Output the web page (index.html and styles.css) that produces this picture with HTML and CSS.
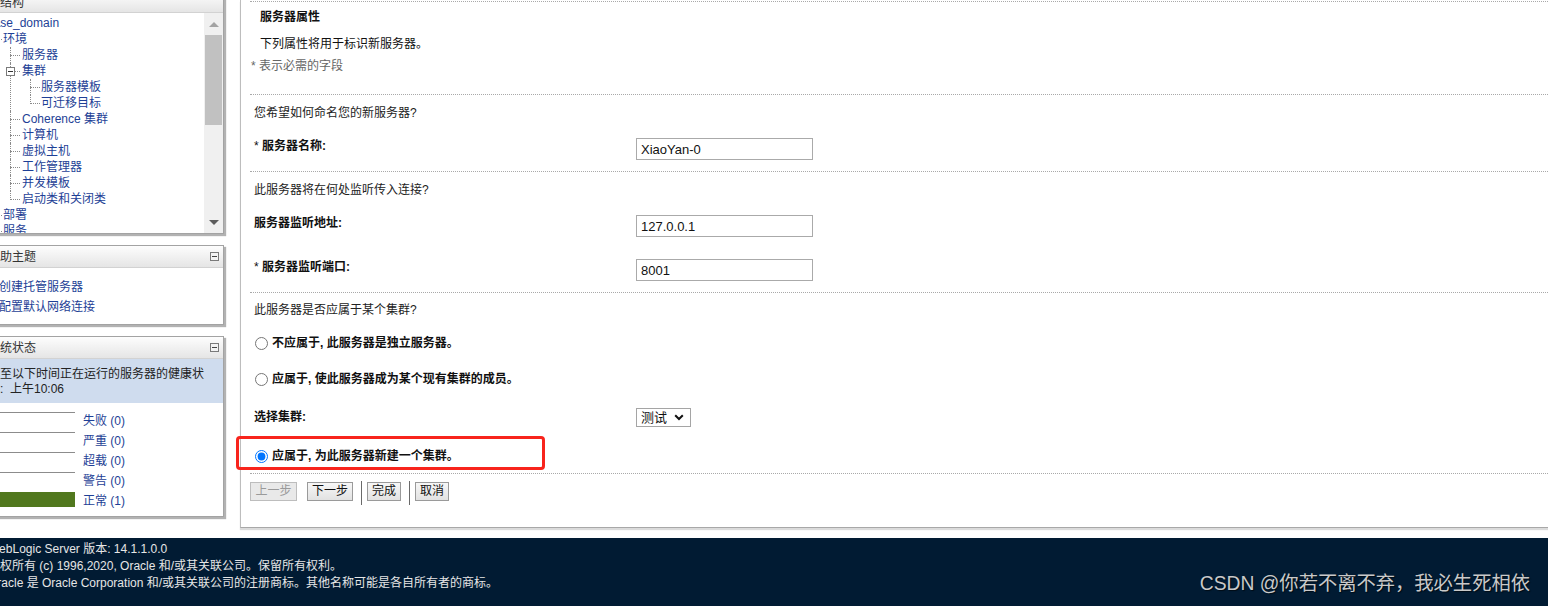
FILE: index.html
```html
<!DOCTYPE html>
<html lang="zh">
<head>
<meta charset="utf-8">
<title>创建新服务器</title>
<link rel="stylesheet" href="styles.css">
</head>
<body>
<div class="page">
  <div class="content">
    <aside class="side">
      <section class="panel panel-tree">
        <div class="panel-head tree-head"><span class="panel-title">域结构</span></div>
        <div class="tree-body">
          <div class="tree">
            <ul class="t0">
              <li><span class="node">base_domain</span>
                <ul class="t1">
                  <li><span class="node">环境</span>
                    <ul class="t2">
                      <li><span class="node">服务器</span></li>
                      <li><span class="toggle"></span><span class="node">集群</span>
                        <ul class="t3">
                          <li><span class="node">服务器模板</span></li>
                          <li class="last"><span class="node">可迁移目标</span></li>
                        </ul>
                      </li>
                      <li><span class="node">Coherence 集群</span></li>
                      <li><span class="node">计算机</span></li>
                      <li><span class="node">虚拟主机</span></li>
                      <li><span class="node">工作管理器</span></li>
                      <li><span class="node">并发模板</span></li>
                      <li class="last"><span class="node">启动类和关闭类</span></li>
                    </ul>
                  </li>
                  <li><span class="node">部署</span></li>
                  <li><span class="node">服务</span></li>
                  <li><span class="node">安全领域</span></li>
                </ul>
              </li>
            </ul>
          </div>
          <div class="vscroll">
            <div class="vs-btn"><span class="arrow-up"></span></div>
            <div class="vs-thumb"></div>
            <div class="vs-space"></div>
            <div class="vs-btn"><span class="arrow-down"></span></div>
          </div>
        </div>
      </section>

      <section class="panel">
        <div class="panel-head"><span class="panel-title">帮助主题</span><span class="collapse"></span></div>
        <div class="help-body">
          <a class="help-link">创建托管服务器</a>
          <a class="help-link">配置默认网络连接</a>
        </div>
      </section>

      <section class="panel">
        <div class="panel-head"><span class="panel-title">系统状态</span><span class="collapse"></span></div>
        <div class="status-band">截至以下时间正在运行的服务器的健康状<br>况:&nbsp; 上午10:06</div>
        <div class="status-rows">
          <div class="status-row"><span class="bar"></span><a class="status-link">失败 (0)</a></div>
          <div class="status-row"><span class="bar"></span><a class="status-link">严重 (0)</a></div>
          <div class="status-row"><span class="bar"></span><a class="status-link">超载 (0)</a></div>
          <div class="status-row"><span class="bar"></span><a class="status-link">警告 (0)</a></div>
          <div class="status-row"><span class="bar bar-ok"></span><a class="status-link">正常 (1)</a></div>
        </div>
      </section>
    </aside>

    <main class="main">
      <div class="rule rule-top"></div>
      <div class="title">服务器属性</div>
      <div class="desc">下列属性将用于标识新服务器。</div>
      <div class="req">* 表示必需的字段</div>
      <div class="rule"></div>
      <div class="q q1">您希望如何命名您的新服务器?</div>
      <div class="field f1">
        <label class="label"><span class="star">*</span> 服务器名称:</label>
        <input class="text" type="text" value="XiaoYan-0" readonly>
      </div>
      <div class="rule"></div>
      <div class="q q1">此服务器将在何处监听传入连接?</div>
      <div class="field f2">
        <label class="label">服务器监听地址:</label>
        <input class="text" type="text" value="127.0.0.1" readonly>
      </div>
      <div class="field f1">
        <label class="label"><span class="star">*</span> 服务器监听端口:</label>
        <input class="text" type="text" value="8001" readonly>
      </div>
      <div class="rule"></div>
      <div class="q q2">此服务器是否应属于某个集群?</div>
      <div class="radio-row r1">
        <input class="radio" type="radio" name="cl">
        <span class="rlabel">不应属于, 此服务器是独立服务器。</span>
      </div>
      <div class="radio-row r2">
        <input class="radio" type="radio" name="cl">
        <span class="rlabel">应属于, 使此服务器成为某个现有集群的成员。</span>
      </div>
      <div class="field select-row">
        <label class="label">选择集群:</label>
        <span class="select">测试<svg class="chev" width="10" height="7" viewBox="0 0 10 7"><path d="M1.2 1.2 L5 5 L8.8 1.2" fill="none" stroke="#111" stroke-width="2"/></svg></span>
      </div>
      <div class="radio-row r3">
        <input class="radio" type="radio" name="cl" checked>
        <span class="rlabel">应属于, 为此服务器新建一个集群。</span>
      </div>
      <div class="rule"></div>
      <div class="buttons">
        <button class="btn btn-dis" type="button">上一步</button>
        <button class="btn btn-next" type="button">下一步</button>
        <span class="sep"></span>
        <button class="btn btn-sm" type="button">完成</button>
        <span class="sep"></span>
        <button class="btn btn-sm" type="button">取消</button>
      </div>
    </main>
  </div>

  <footer class="footer">
    <div class="foot-text">
      <div>WebLogic Server 版本: 14.1.1.0.0</div>
      <div>版权所有 (c) 1996,2020, Oracle 和/或其关联公司。保留所有权利。</div>
      <div>Oracle 是 Oracle Corporation 和/或其关联公司的注册商标。其他名称可能是各自所有者的商标。</div>
    </div>
    <div class="watermark">CSDN @你若不离不弃，我必生死相依</div>
  </footer>

  <div class="annot"></div>
</div>
</body>
</html>
```

FILE: styles.css
```css
* { box-sizing: border-box; }
html, body { margin: 0; padding: 0; }
body {
  width: 1548px;
  height: 606px;
  overflow: hidden;
  background: #fff;
  font-family: "Liberation Sans", "Noto Sans CJK SC", sans-serif;
  font-size: 12px;
  color: #222;
}
.page { position: relative; width: 1548px; height: 606px; overflow: hidden; }
.content { display: flex; align-items: flex-start; height: 538px; }

/* ---------- side column ---------- */
.side { flex: none; width: 240px; margin-left: -16px; margin-top: -8px; }
.panel {
  background: #fff;
  border: 1px solid #a3a3a3;
  box-shadow: 2px 2px 1px rgba(0, 0, 0, 0.3);
}
.panel + .panel { margin-top: 11px; }
.panel-head {
  display: flex;
  align-items: center;
  justify-content: space-between;
  height: 22px;
  padding: 0 4px 0 3px;
  background: linear-gradient(#fdfdfd, #e5e5e5);
  border-bottom: 1px solid #d2d2d2;
  color: #333;
}
.tree-head { height: 20px; }
.panel-title { line-height: 16px; white-space: nowrap; }
.collapse {
  width: 9px; height: 9px;
  border: 1px solid #7a7a7a;
  background: #f3f3f3;
  display: flex; align-items: center; justify-content: center;
}
.collapse::before { content: ""; width: 5px; height: 1px; background: #444; }

.tree-body { display: flex; height: 220px; }
.tree { flex: 1; overflow: hidden; padding: 2px 0 0 2px; color: #1e3f96; }
.tree ul { list-style: none; margin: 0; padding: 0; }
.tree li { position: relative; line-height: 16px; white-space: nowrap; }
.node { position: relative; }
.tree .t1 { margin-left: 3px; }
.tree .t1 > li { padding-left: 13px; }
.tree .t1 > li::before {
  content: ""; position: absolute; left: 0; top: 8px; width: 12px;
  border-top: 1px dotted #8a8a8a;
}
.tree .t2 { margin-left: 7px; }
.tree .t3 { margin-left: 8px; }
.tree .t2 > li { padding-left: 12px; }
.tree .t3 > li { padding-left: 11px; }
.tree .t2 > li::before, .tree .t3 > li::before {
  content: ""; position: absolute; left: 0; top: 8px; width: 10px;
  border-top: 1px dotted #8a8a8a;
}
.tree .t2 > li::after, .tree .t3 > li::after {
  content: ""; position: absolute; left: 0; top: 0; bottom: 0;
  border-left: 1px dotted #8a8a8a;
}
.tree .t2 > li.last::after, .tree .t3 > li.last::after { bottom: auto; height: 9px; }
.toggle {
  position: absolute; left: -4px; top: 4px; z-index: 2;
  width: 9px; height: 9px;
  border: 1px solid #7a7a7a; background: #fff;
}
.toggle::before {
  content: ""; position: absolute; left: 1px; top: 3px; width: 5px; height: 1px; background: #333;
}

.vscroll { flex: none; width: 19px; background: #f0f0f0; display: flex; flex-direction: column; }
.vs-btn { height: 22px; display: flex; align-items: center; justify-content: center; }
.arrow-up { width: 0; height: 0; border-left: 5px solid transparent; border-right: 5px solid transparent; border-bottom: 5px solid #a3a3a3; }
.arrow-down { width: 0; height: 0; border-left: 5px solid transparent; border-right: 5px solid transparent; border-top: 5px solid #5c5c5c; }
.vs-thumb { height: 90px; margin: 0 1px; background: #c1c1c1; }
.vs-space { flex: 1; }

.help-body { display: flex; flex-direction: column; padding: 9px 0 7px 14px; height: 56px; }
.help-link { color: #1e3f96; line-height: 20px; white-space: nowrap; }

.status-band {
  background: #cfdcee;
  color: #222;
  padding: 8px 0 6px 3px;
  line-height: 15px;
  height: 44px;
  white-space: nowrap;
}
.status-rows { padding: 8px 0 5px 5px; }
.status-row { display: flex; align-items: flex-start; height: 20px; }
.bar { flex: none; width: 85px; height: 15px; margin-top: 1px; border-top: 1px solid #8c8c8c; }
.bar-ok { background: #51781e; border-top-color: #51781e; }
.status-link { margin-left: 8px; line-height: 20px; color: #1e3f96; white-space: nowrap; }

/* ---------- main form ---------- */
.main {
  flex: 1;
  min-width: 0;
  height: 528px;
  margin-left: 16px;
  padding-left: 9px;
  border-left: 1px solid #bdbdbd;
  border-bottom: 1px solid #a8a8a8;
  box-shadow: 0 2px 1px rgba(0, 0, 0, 0.14);
}
.rule { height: 0; border-top: 1px dotted #a9a9a9; }
.rule-top { margin-top: 1px; }
.title { height: 30px; line-height: 30px; padding-left: 10px; font-weight: bold; color: #111; }
.desc { height: 24px; line-height: 24px; padding-left: 10px; color: #111; }
.req { height: 21px; line-height: 21px; padding-left: 1px; color: #666; margin-bottom: 17px; }
.q { padding-left: 4px; color: #222; }
.q1 { height: 36px; line-height: 36px; }
.q2 { height: 35px; line-height: 35px; }

.field { display: flex; align-items: flex-start; }
.f1 { height: 40px; }
.f2 { height: 44px; }
.label {
  flex: none; width: 386px; padding-left: 4px; margin-top: 5px;
  line-height: 20px; font-weight: bold; color: #111; white-space: nowrap;
}
.star { font-weight: normal; }
.text {
  margin: 7px 0 0 0;
  width: 177px; height: 22px;
  padding: 0 4px;
  border: 1px solid #aaaaaa;
  border-radius: 0;
  font-family: "Liberation Sans", "Noto Sans CJK SC", sans-serif;
  font-size: 13px;
  color: #111;
  background: #fff;
  outline: none;
}

.radio-row { display: flex; align-items: center; }
.r1 { height: 30px; }
.r2 { height: 42px; }
.r3 { height: 39px; padding-top: 5px; }
.radio { width: 13px; height: 13px; margin: 0 4px 0 5px; flex: none; }
.rlabel { font-weight: bold; color: #111; line-height: 20px; white-space: nowrap; }

.select-row { height: 34px; }
.select-row .label { margin-top: 7px; }
.select {
  margin-top: 8px;
  display: flex; align-items: center; justify-content: space-between;
  width: 55px; height: 19px;
  padding: 0 6px 0 4px;
  border: 1px solid #a5a5a5;
  font-size: 13px;
  line-height: 17px;
  color: #111;
}
.chev { display: block; }

.buttons { display: flex; align-items: flex-start; padding-top: 7px; }
.btn {
  margin: 1px 0 0 0;
  height: 19px;
  padding: 0;
  border: 1px solid #9a9a9a;
  background: linear-gradient(#f7f7f7, #e2e2e2);
  font-family: "Liberation Sans", "Noto Sans CJK SC", sans-serif;
  font-size: 12px;
  line-height: 17px;
  color: #111;
  border-radius: 0;
}
.btn-dis { width: 47px; color: #9a9a9a; border-color: #bdbdbd; background: #e9e9e9; }
.btn-next { width: 46px; margin-left: 10px; }
.btn-sm { width: 34px; margin-left: 5px; }
.sep { width: 1px; height: 24px; background: #6a6a6a; margin-left: 8px; }

/* ---------- footer ---------- */
.footer {
  position: relative;
  height: 68px;
  background: #011b33;
  color: #e6e6e6;
  padding-top: 3px;
}
.foot-text { margin-left: -12px; line-height: 17px; white-space: nowrap; }
.watermark {
  position: absolute;
  right: 18px;
  top: 35px;
  font-size: 19.3px;
  line-height: 22px;
  color: #c9c9c9;
  text-shadow: 1px 1px 1px rgba(0, 0, 0, 0.6);
  white-space: nowrap;
}

/* annotation overlay */
.annot {
  position: absolute;
  left: 236px;
  top: 436px;
  width: 309px;
  height: 34px;
  border: 3px solid #f8241c;
  border-radius: 4px;
}
```
